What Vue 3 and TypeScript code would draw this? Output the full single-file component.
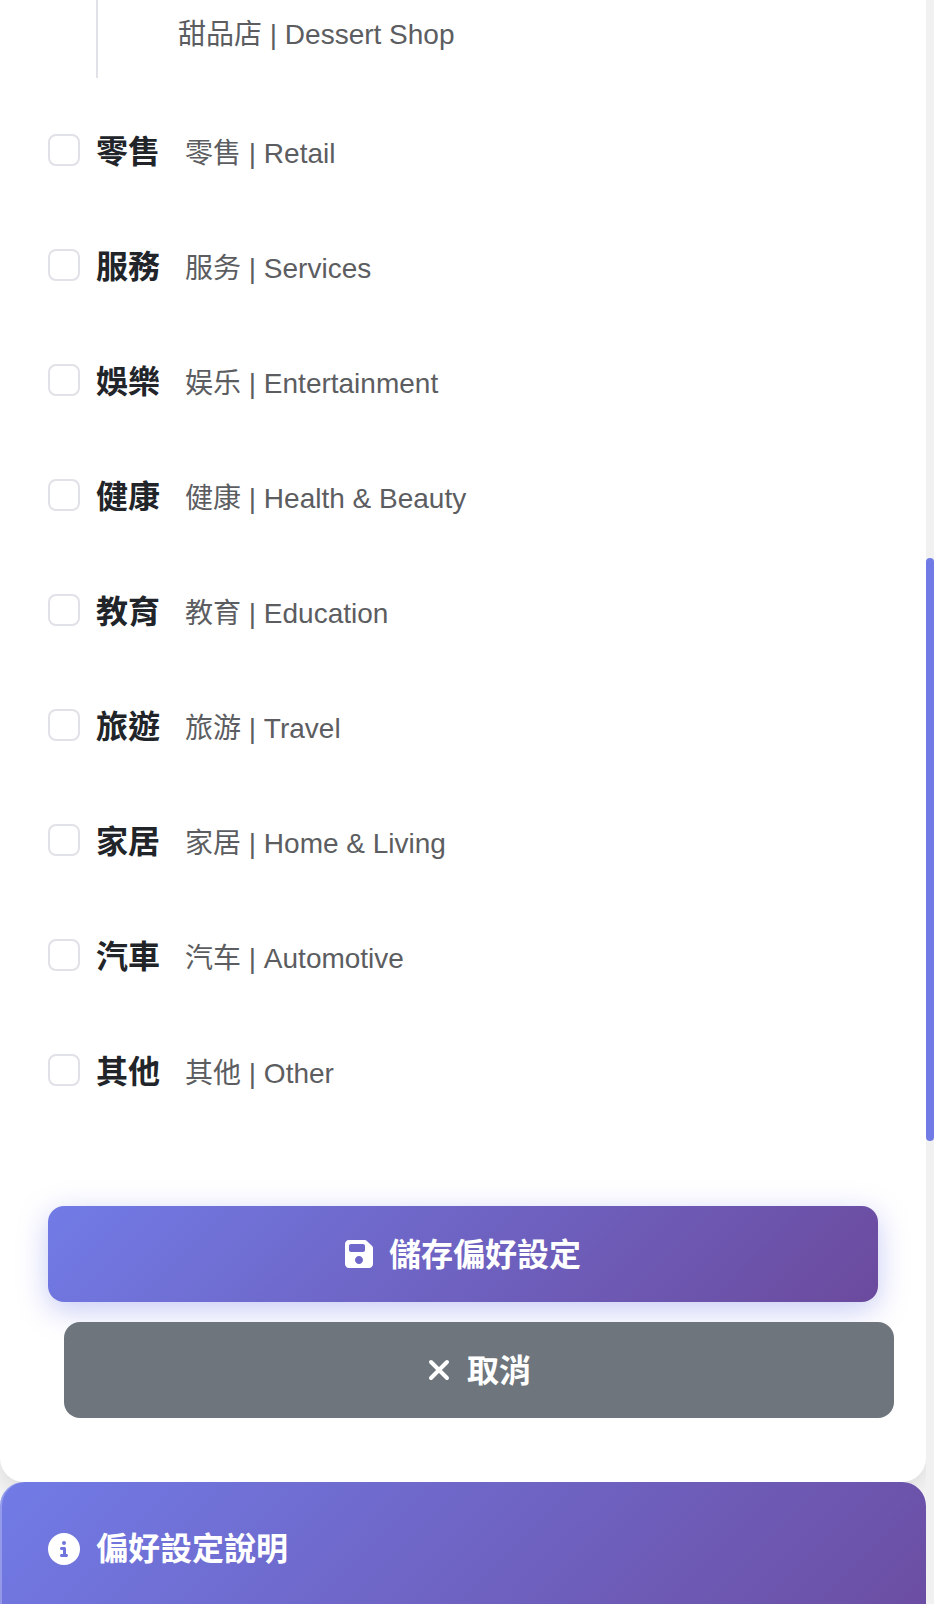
<script setup lang="ts">
import { ref } from 'vue'

interface Category {
  id: string
  name: string
  alt: string
}

const categories: Category[] = [
  { id: 'retail', name: '零售', alt: '零售 | Retail' },
  { id: 'services', name: '服務', alt: '服务 | Services' },
  { id: 'entertainment', name: '娛樂', alt: '娱乐 | Entertainment' },
  { id: 'health', name: '健康', alt: '健康 | Health & Beauty' },
  { id: 'education', name: '教育', alt: '教育 | Education' },
  { id: 'travel', name: '旅遊', alt: '旅游 | Travel' },
  { id: 'home', name: '家居', alt: '家居 | Home & Living' },
  { id: 'automotive', name: '汽車', alt: '汽车 | Automotive' },
  { id: 'other', name: '其他', alt: '其他 | Other' },
]

const selected = ref<string[]>([])
</script>

<template>
  <div class="page">
    <main class="content">
      <form class="card" @submit.prevent>
        <div class="sublist">
          <span class="alt" lang="zh-Hans">甜品店 | Dessert Shop</span>
        </div>
        <ul class="categories">
          <li v-for="c in categories" :key="c.id">
            <label class="category" :for="c.id">
              <input :id="c.id" v-model="selected" type="checkbox" :value="c.id" />
              <span class="name">{{ c.name }}</span>
              <span class="alt" lang="zh-Hans">{{ c.alt }}</span>
            </label>
          </li>
        </ul>
        <div class="actions">
          <button class="btn save" type="submit">
            <svg class="icon-save" viewBox="0 0 448 512" aria-hidden="true">
              <path fill="currentColor" d="M433.900 129.900l-83.800-83.800A48 48 0 0 0 316 32H64C28 32 0 60 0 96v320c0 36 28 64 64 64h320c36 0 64-28 64-64V163.900a48 48 0 0 0-14.100-34zM224 416c-35.300 0-64-28.700-64-64s28.700-64 64-64 64 28.700 64 64-28.700 64-64 64zm96-224c0 17.700-14.300 32-32 32H96c-17.700 0-32-14.300-32-32v-64c0-17.700 14.300-32 32-32h192c17.700 0 32 14.300 32 32z" />
            </svg>
            <span class="label">儲存偏好設定</span>
          </button>
          <button class="btn cancel" type="button">
            <svg class="icon-close" viewBox="0 0 24 32" aria-hidden="true">
              <path d="M4 8l16 16M20 8L4 24" fill="none" stroke="currentColor" stroke-width="4" stroke-linecap="round" />
            </svg>
            <span class="label">取消</span>
          </button>
        </div>
      </form>
      <section class="info">
        <h2>
          <svg class="icon-info" viewBox="0 0 512 512" aria-hidden="true">
            <path fill="currentColor" fill-rule="evenodd" d="M256 0a256 256 0 1 0 0 512a256 256 0 1 0 0-512zM216 336h24v-64h-24c-13.300 0-24-10.700-24-24s10.700-24 24-24h48c13.300 0 24 10.700 24 24v88h8c13.300 0 24 10.700 24 24s-10.700 24-24 24h-80c-13.300 0-24-10.700-24-24s10.700-24 24-24zM256 128a32 32 0 1 0 0 64a32 32 0 1 0 0-64z" />
          </svg>
          偏好設定說明
        </h2>
      </section>
    </main>
    <div class="scrollbar" aria-hidden="true"><div class="thumb"></div></div>
  </div>
</template>

<style>
body {
  margin: 0;
  background: #f6f6f7;
}
</style>

<style scoped>
.page {
  display: flex;
  height: 100vh;
  overflow: hidden;
  font-family: "Liberation Sans", "Noto Sans CJK TC", sans-serif;
  color: #212529;
}

.content {
  flex: 1;
  min-width: 0;
  display: flex;
  flex-direction: column;
}

.card {
  flex: none;
  padding: 0 48px 64px;
  background: #fff;
  border-radius: 0 0 24px 24px;
  box-shadow: 0 8px 24px rgba(0, 0, 0, 0.12);
}

.sublist {
  height: 78px;
  box-sizing: border-box;
  margin-left: 48px;
  padding: 15px 0 0 80px;
  border-left: 2px solid #e1e1e8;
}

.alt {
  font-size: 28px;
  line-height: 40px;
  color: #5c5d61;
}

.alt:lang(zh-Hans) {
  font-family: "Liberation Sans", "Noto Sans CJK SC", sans-serif;
}

.categories {
  list-style: none;
  margin: 0;
  padding: 16px 0 0;
}

.category {
  display: flex;
  align-items: baseline;
  box-sizing: border-box;
  height: 115px;
  padding-top: 34px;
}

.category input {
  appearance: none;
  align-self: flex-start;
  width: 32px;
  height: 32px;
  margin: 6px 16px 0 0;
  border: 2px solid #e1e1e8;
  border-radius: 8px;
  background: #fff;
}

.category input:checked {
  background: #717be6;
}

.name {
  margin-right: 25px;
  font-size: 32px;
  line-height: 48px;
  font-weight: 700;
}

.actions {
  display: flex;
  flex-direction: column;
  gap: 20px;
  padding-top: 77px;
}

.btn {
  display: flex;
  align-items: center;
  justify-content: center;
  gap: 16px;
  height: 96px;
  border: 0;
  border-radius: 16px;
  color: #fff;
  font: inherit;
  font-size: 32px;
  font-weight: 700;
}

.label {
  padding-bottom: 4px;
}

.save {
  background: linear-gradient(135deg, #717be6 0%, #6b4a9d 100%);
  box-shadow: 0 8px 30px rgba(113, 123, 230, 0.4);
}

.cancel {
  margin: 0 -16px 0 16px;
  background: #6e757c;
}

.icon-save {
  width: 28px;
  height: 32px;
}

.icon-close {
  width: 24px;
  height: 32px;
}

.info {
  flex: 1;
  min-height: 136px;
  padding: 40px 48px;
  border-radius: 24px 24px 0 0;
  background: linear-gradient(135deg, #717be6 0%, #6b4a9d 100%);
  box-shadow: inset 2px 0 rgba(255, 255, 255, 0.25);
  color: #fff;
}

.info h2 {
  display: flex;
  align-items: center;
  gap: 16px;
  margin: 0;
  font-size: 32px;
  line-height: 54px;
  font-weight: 700;
}

.icon-info {
  width: 32px;
  height: 32px;
}

.scrollbar {
  width: 8px;
  background: #f1f1f1;
}

.thumb {
  height: 583px;
  margin-top: 558px;
  border-radius: 8px;
  background: #717be6;
}
</style>
